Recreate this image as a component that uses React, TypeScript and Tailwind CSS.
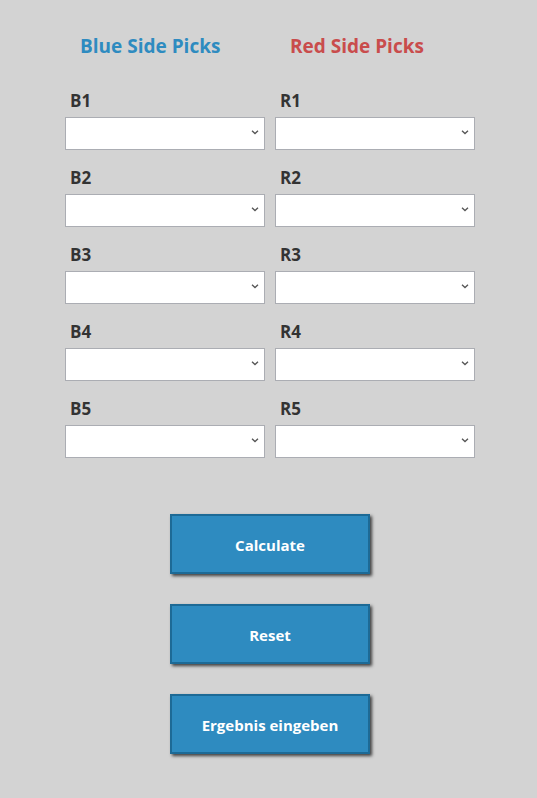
const sides = [
  { title: "Blue Side Picks", prefix: "B", color: "text-[#2e8bc0]" },
  { title: "Red Side Picks", prefix: "R", color: "text-[#c94c4c]" },
];

const slots = [1, 2, 3, 4, 5];

const actions = ["Calculate", "Reset", "Ergebnis eingeben"];

function PickSelect({ name }: { name: string }) {
  return (
    <div>
      <label
        htmlFor={name}
        className="mb-1 block pl-[5px] text-[17px] leading-6 font-bold text-[#333333]"
      >
        {name}
      </label>
      <div className="relative">
        <select
          id={name}
          className="block h-[33px] w-full appearance-none border border-[#abadb3] bg-white px-2 text-sm outline-none"
        >
          <option value=""></option>
        </select>
        <svg
          viewBox="0 0 8 5"
          className="pointer-events-none absolute top-[13px] right-[6px] h-[5px] w-2"
          fill="none"
          stroke="#555555"
          strokeWidth="1.3"
          aria-hidden="true"
        >
          <path d="M1 0.8 L4 3.6 L7 0.8" />
        </svg>
      </div>
    </div>
  );
}

export default function App() {
  return (
    <main className="flex min-h-screen flex-col items-center bg-[#d3d3d3] pt-8 pb-11 pl-[3px] font-['Open_Sans','Noto_Sans',sans-serif]">
      <div className="grid w-full max-w-[410px] grid-cols-2 gap-x-[10px]">
        {sides.map((side) => (
          <section key={side.prefix}>
            <h2 className={`mb-[29px] pl-[15px] text-[19px] leading-7 font-bold ${side.color}`}>
              {side.title}
            </h2>
            <div className="flex flex-col gap-4">
              {slots.map((slot) => (
                <PickSelect key={slot} name={`${side.prefix}${slot}`} />
              ))}
            </div>
          </section>
        ))}
      </div>
      <div className="mt-14 flex w-full max-w-[200px] flex-col gap-[30px]">
        {actions.map((action) => (
          <button
            key={action}
            type="button"
            className="h-[60px] w-full border-2 border-[#1d6a96] bg-[#2e8bc0] pt-[2px] text-[15px] leading-5 font-bold text-white shadow-[2px_2px_3px_0px_rgba(0,0,0,0.7)]"
          >
            {action}
          </button>
        ))}
      </div>
    </main>
  );
}
